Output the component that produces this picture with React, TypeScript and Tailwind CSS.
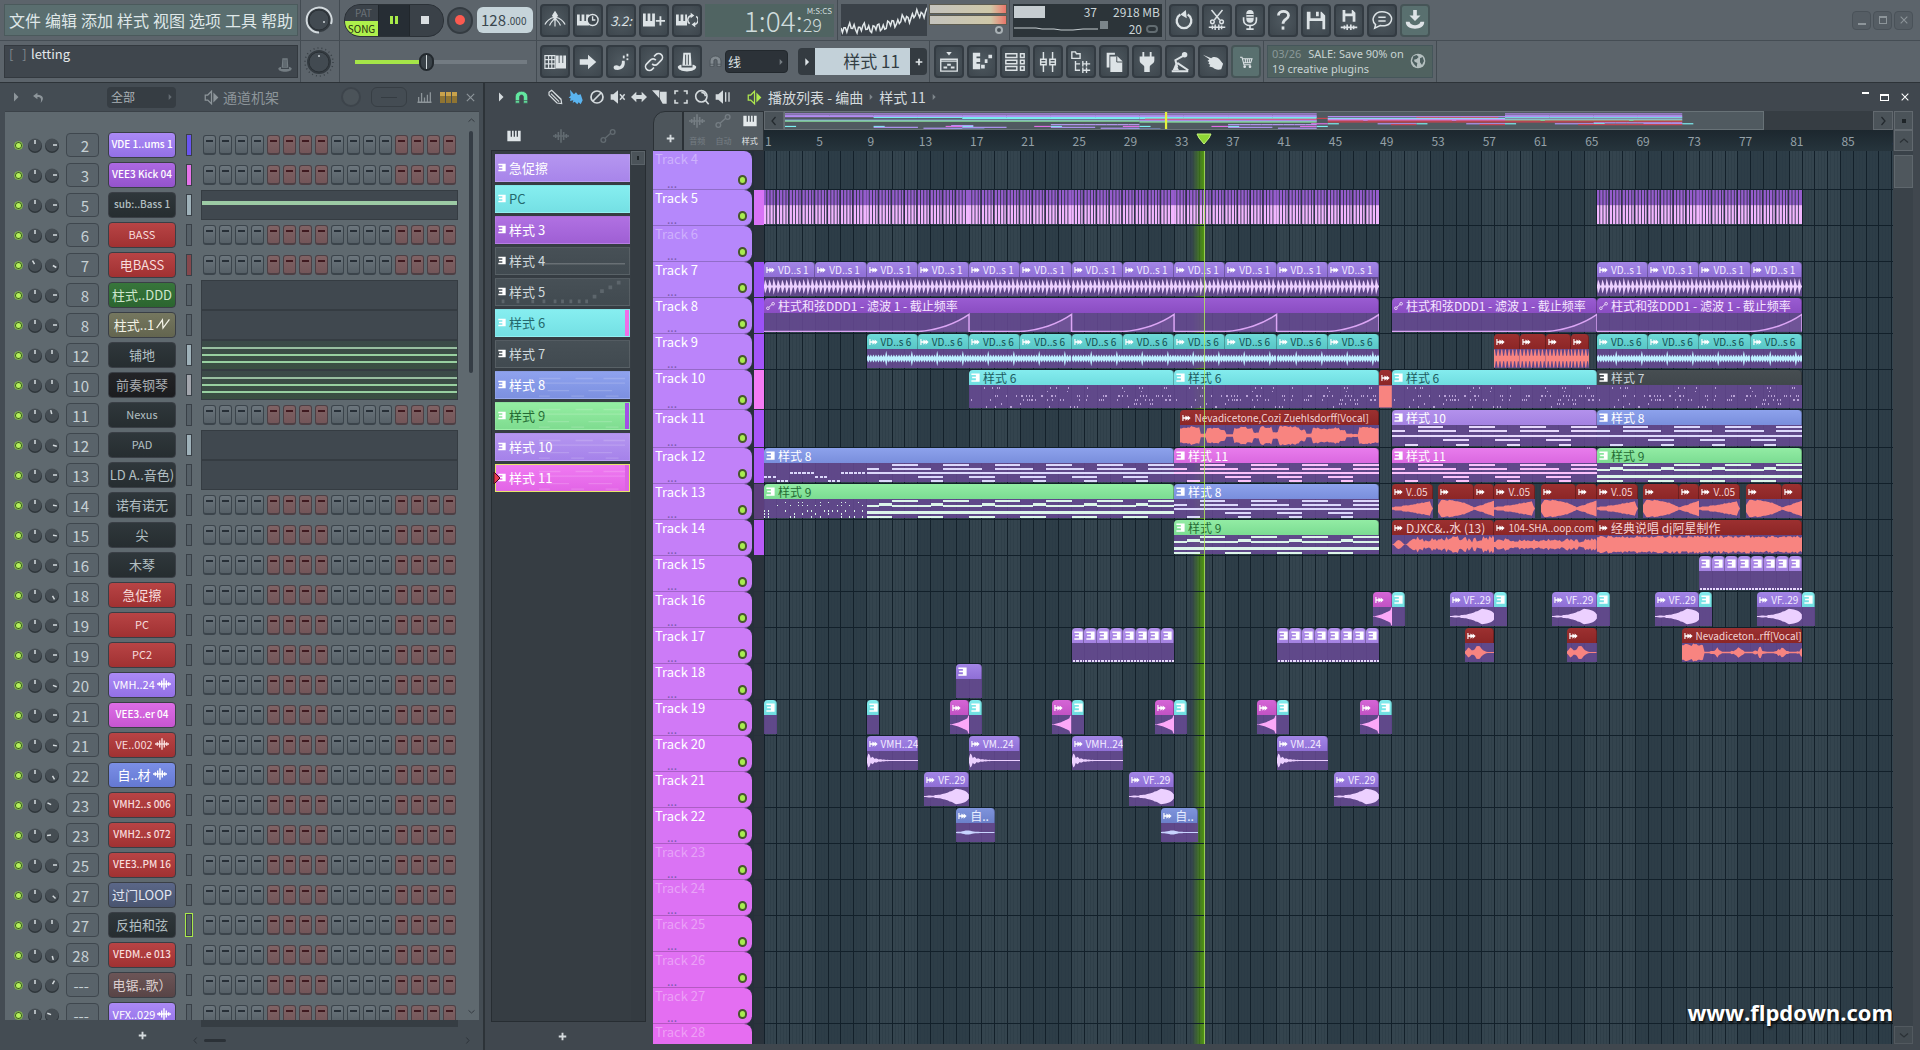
import React, { useState } from "react";
import clsx from "clsx";

/* ------------------------------------------------------------------ data */

const SPAN = 88.1;
const MAP_SPAN = 88.3;
const PLAYHEAD = 35.3;

const at = (bar: number) => `${((bar - 1) / SPAN) * 100}%`;
const len = (bars: number) => `${(bars / SPAN) * 100}%`;

const hasCjk = (text: string) => /[\u4e00-\u9fff]/.test(text);

const noise = (i: number) => {
  const v = Math.sin(i * 12.9898 + 4.1) * 43758.5453;
  return v - Math.floor(v);
};

type Tone = "red" | "violet" | "purple" | "magenta" | "blue" | "dark" | "black" | "green" | "olive" | "slate" | "brown";

const channelTone: Record<Tone, string> = {
  red: "from-[#b84445] to-[#a03132] text-[#f7dcdc]",
  violet: "from-[#ab8af5] to-[#9370e6] text-white",
  purple: "from-[#ad69e2] to-[#9453cc] text-white",
  magenta: "from-[#dd6de6] to-[#c655d0] text-white",
  blue: "from-[#7b8fe6] to-[#6478d2] text-white",
  dark: "from-[#2f373b] to-[#262d30] text-[#b4c0c4]",
  black: "from-[#232427] to-[#1b1c1f] text-[#a9adb1]",
  green: "from-[#37763b] to-[#2b652f] text-[#cfe6cf]",
  olive: "from-[#75775f] to-[#63654f] text-[#f2f2e6]",
  slate: "from-[#5b6788] to-[#49546f] text-[#e2e7f2]",
  brown: "from-[#6c5557] to-[#584446] text-[#dccfcf]",
};

type Channel = {
  no: string;
  name: string;
  tone: Tone;
  wave?: boolean;
  auto?: boolean;
  lamp?: string;
  roll?: number;
  knob?: number;
  selected?: boolean;
};

const channels: Channel[] = [
  { no: "2", name: "VDE 1..ums 1", tone: "violet", lamp: "bg-[#6a55f0]", knob: 90 },
  { no: "3", name: "VEE3 Kick 04", tone: "purple", lamp: "bg-[#e673ea]", knob: 90 },
  { no: "5", name: "sub:..Bass 1", tone: "dark", lamp: "bg-[#9fb2ba]", roll: 1, knob: 90 },
  { no: "6", name: "BASS", tone: "red", knob: 90 },
  { no: "7", name: "电BASS", tone: "red", lamp: "bg-[#85484d]", knob: 120 },
  { no: "8", name: "柱式..DDD", tone: "green", roll: 0, knob: 90 },
  { no: "8", name: "柱式..1", tone: "olive", auto: true, roll: 0, knob: 90 },
  { no: "12", name: "铺地", tone: "dark", lamp: "bg-[#9fb2ba]", roll: 3, knob: 0 },
  { no: "10", name: "前奏钢琴", tone: "black", lamp: "bg-[#a3a6ad]", roll: 3, knob: 0 },
  { no: "11", name: "Nexus", tone: "dark", knob: -15 },
  { no: "12", name: "PAD", tone: "dark", lamp: "bg-[#9fb2ba]", roll: 0, knob: 105 },
  { no: "13", name: "LD A..音色)", tone: "dark", roll: 0, knob: 90 },
  { no: "14", name: "诺有诺无", tone: "dark", knob: 100 },
  { no: "15", name: "尖", tone: "dark", knob: 100 },
  { no: "16", name: "木琴", tone: "dark", knob: 90 },
  { no: "18", name: "急促擦", tone: "red", knob: 150 },
  { no: "19", name: "PC", tone: "red", knob: 90 },
  { no: "19", name: "PC2", tone: "red", knob: 90 },
  { no: "20", name: "VMH..24", tone: "violet", wave: true, knob: 110 },
  { no: "21", name: "VEE3..er 04", tone: "magenta", knob: 90 },
  { no: "21", name: "VE..002", tone: "red", wave: true, knob: 100 },
  { no: "22", name: "自..材", tone: "blue", wave: true, knob: 150 },
  { no: "23", name: "VMH2..s 006", tone: "red", knob: -65 },
  { no: "23", name: "VMH2..s 072", tone: "red", knob: -95 },
  { no: "25", name: "VEE3..PM 16", tone: "red", knob: 90 },
  { no: "27", name: "过门LOOP", tone: "slate", knob: 135 },
  { no: "27", name: "反拍和弦", tone: "dark", knob: 0, selected: true },
  { no: "28", name: "VEDM..e 013", tone: "red", knob: 165 },
  { no: "---", name: "电锯..歌）", tone: "brown", knob: 30 },
  { no: "---", name: "VFX..029", tone: "violet", wave: true, knob: -70 },
];

type PatternItem = { name: string; look: string; strip?: string; lines?: number; dots?: boolean };

const patterns: PatternItem[] = [
  { name: "急促擦", look: "from-[#b596f0] to-[#a885ea] text-white" },
  { name: "PC", look: "from-[#86eef0] to-[#74e0e4] text-[#24686c]" },
  { name: "样式 3", look: "from-[#b071e2] to-[#9f5fd4] text-white" },
  { name: "样式 4", look: "from-[#475056] to-[#414a50] text-[#cfd9dc]", lines: 1 },
  { name: "样式 5", look: "from-[#475056] to-[#414a50] text-[#cfd9dc]", dots: true },
  { name: "样式 6", look: "from-[#86eef0] to-[#74e0e4] text-[#24686c]", strip: "bg-[#ee6fe8]" },
  { name: "样式 7", look: "from-[#475056] to-[#414a50] text-[#cfd9dc]" },
  { name: "样式 8", look: "from-[#8ea2ee] to-[#7c90e0] text-white", lines: 3 },
  { name: "样式 9", look: "from-[#94eea2] to-[#7fdc90] text-[#256b34]", strip: "bg-[#a24fe6]", lines: 3 },
  { name: "样式 10", look: "from-[#b596f0] to-[#a582ea] text-white", lines: 3 },
  { name: "样式 11", look: "from-[#f07af2] to-[#e264e6] text-white", strip: "bg-[#dd62e4]", lines: 3 },
];

type Kind = "pattern" | "audio" | "auto" | "stripes";
type Body =
  | "beat" | "hat" | "saw" | "vocal" | "vocal2" | "chops" | "loop" | "wall" | "v05" | "blob"
  | "tail" | "riser" | "decay" | "swell" | "thin" | "stab" | "block"
  | "ramp" | "chord" | "pads" | "dots" | "ticks" | "empty";
type Look = "violet" | "purple" | "deep" | "cyan" | "teal" | "red" | "blue" | "sky" | "green" | "pink" | "magenta" | "grey";

const clipLook: Record<Look, { head: string; color: string; ink: string }> = {
  violet: { head: "from-[#a385e6] to-[#8f6fd6] text-[#f3ecff]", color: "#b295f5", ink: "#ecd0ff" },
  purple: { head: "from-[#b391ec] to-[#a482e2] text-white", color: "#b99bf6", ink: "#e6d8fb" },
  deep: { head: "from-[#9a5cd2] to-[#8a4dc2] text-[#f5e6ff]", color: "#b88af5", ink: "#dca6f5" },
  cyan: { head: "from-[#84ecee] to-[#6fdde0] text-[#1d5c60]", color: "#7eeff2", ink: "#b9a2d6" },
  teal: { head: "from-[#6edad8] to-[#58c6c6] text-[#144e50]", color: "#78e8ea", ink: "#bdf0ff" },
  red: { head: "from-[#9c3030] to-[#8c2626] text-[#f5d5d5]", color: "#c84450", ink: "#f88480" },
  blue: { head: "from-[#8da2ec] to-[#798edc] text-white", color: "#8fa6f2", ink: "#dcd8fb" },
  sky: { head: "from-[#7f94dc] to-[#6b80ca] text-[#e8eeff]", color: "#8fa6f2", ink: "#c8d4ff" },
  green: { head: "from-[#92eca4] to-[#7bdc92] text-[#256b34]", color: "#90f0a4", ink: "#dcf5ea" },
  pink: { head: "from-[#e87cec] to-[#da68e0] text-white", color: "#ee80f2", ink: "#fbc2fb" },
  magenta: { head: "from-[#d565d6] to-[#c252c4] text-white", color: "#e070e4", ink: "#fca8f8" },
  grey: { head: "from-[#474e52] to-[#40474b] text-[#ccd6da]", color: "#7a848a", ink: "#b9a2d6" },
};

type ClipData = { from: number; to: number; kind: Kind; look: Look; body: Body; title?: string };

const clip = (from: number, to: number, kind: Kind, look: Look, body: Body, title?: string): ClipData => ({
  from, to, kind, look, body, title,
});

const run = (from: number, count: number, step: number, make: (a: number, b: number) => ClipData) =>
  Array.from({ length: count }, (_, i) => make(from + i * step, from + (i + 1) * step));

const drum = (a: number, b: number) => clip(a, b, "audio", "violet", "beat", "VD..s 1");
const hat = (a: number, b: number) => clip(a, b, "audio", "teal", "hat", "VD..s 6");
const cell = (a: number, b: number) => clip(a, b, "pattern", "purple", "ticks");
const sweep = (a: number) => [
  clip(a - 1.5, a, "audio", "magenta", "swell"),
  clip(a, a + 1, "pattern", "cyan", "empty"),
];
const rise = (a: number) => [
  clip(a - 3.5, a, "audio", "violet", "riser", "VF..29"),
  clip(a, a + 1, "pattern", "cyan", "empty"),
];
const voice = (a: number) => [
  clip(a, a + 3.2, "audio", "red", "v05", "V..05"),
  clip(a + 3.6, a + 6.4, "audio", "red", "blob"),
  clip(a + 6.4, a + 8, "audio", "red", "tail"),
];
const AUTO_NAME = "柱式和弦DDD1 - 滤波 1 - 截止频率";

type Track = { no: number; height: string; shade: string; lamp?: string; muted?: boolean; clips: ClipData[] };

const tracks: Track[] = [
  { no: 4, height: "h-[39px]", shade: "bg-[#b48afb]", muted: true, clips: [] },
  {
    no: 5, height: "h-9", shade: "bg-[#b588fb]", lamp: "bg-[#d873f6]",
    clips: [clip(1, 49, "stripes", "deep", "empty"), clip(66, 82, "stripes", "deep", "empty")],
  },
  { no: 6, height: "h-9", shade: "bg-[#b687fb]", muted: true, clips: [] },
  { no: 7, height: "h-9", shade: "bg-[#b886fb]", lamp: "bg-[#9b52f6]", clips: [...run(1, 12, 4, drum), ...run(66, 4, 4, drum)] },
  {
    no: 8, height: "h-9", shade: "bg-[#b985fa]", lamp: "bg-[#9b52f6]",
    clips: [
      clip(1, 49, "auto", "deep", "ramp", AUTO_NAME),
      clip(50, 66, "auto", "deep", "ramp", AUTO_NAME),
      clip(66, 82, "auto", "deep", "ramp", AUTO_NAME),
    ],
  },
  {
    no: 9, height: "h-9", shade: "bg-[#bb84fa]", lamp: "bg-[#a455f8]",
    clips: [
      ...run(9, 10, 4, hat),
      ...run(58, 3, 2, (a, b) => clip(a, b, "audio", "red", "saw")),
      clip(64, 65.4, "audio", "red", "saw"),
      ...run(66, 4, 4, hat),
    ],
  },
  {
    no: 10, height: "h-10", shade: "bg-[#bd83fa]", lamp: "bg-[#f57bf4]",
    clips: [
      clip(17, 33, "pattern", "cyan", "dots", "样式 6"),
      clip(33, 49, "pattern", "cyan", "dots", "样式 6"),
      clip(49, 50, "audio", "red", "block"),
      clip(50, 66, "pattern", "cyan", "dots", "样式 6"),
      clip(66, 82, "pattern", "grey", "dots", "样式 7"),
    ],
  },
  {
    no: 11, height: "h-[38px]", shade: "bg-[#bf82f9]", lamp: "bg-[#a955f8]",
    clips: [
      clip(33.5, 49, "audio", "red", "vocal", "Nevadicetone,Cozi Zuehlsdorff[Vocal]"),
      clip(50, 66, "pattern", "purple", "chord", "样式 10"),
      clip(66, 82, "pattern", "blue", "chord", "样式 8"),
    ],
  },
  {
    no: 12, height: "h-9", shade: "bg-[#c181f9]", lamp: "bg-[#ad57f8]",
    clips: [
      clip(1, 33, "pattern", "blue", "chord", "样式 8"),
      clip(33, 49, "pattern", "pink", "chord", "样式 11"),
      clip(50, 66, "pattern", "pink", "chord", "样式 11"),
      clip(66, 82, "pattern", "green", "pads", "样式 9"),
    ],
  },
  {
    no: 13, height: "h-9", shade: "bg-[#c380f9]", lamp: "bg-[#5c3f7c]",
    clips: [
      clip(1, 33, "pattern", "green", "pads", "样式 9"),
      clip(33, 49, "pattern", "blue", "chord", "样式 8"),
      ...[50, 58, 66, 74].flatMap(voice),
    ],
  },
  {
    no: 14, height: "h-9", shade: "bg-[#c57ff8]", lamp: "bg-[#b95bf8]",
    clips: [
      clip(33, 49, "pattern", "green", "pads", "样式 9"),
      clip(50, 58, "audio", "red", "chops", "DJXC&..水 (13)"),
      clip(58, 66, "audio", "red", "loop", "104-SHA..oop.com"),
      clip(66, 82, "audio", "red", "wall", "经典说唱 dj阿星制作"),
    ],
  },
  { no: 15, height: "h-9", shade: "bg-[#c87df8]", clips: run(74, 8, 1, cell) },
  { no: 16, height: "h-9", shade: "bg-[#ca7cf7]", clips: [...sweep(50), ...[58, 66, 74, 82].flatMap(rise)] },
  {
    no: 17, height: "h-9", shade: "bg-[#cc7bf7]",
    clips: [
      ...run(25, 8, 1, cell),
      ...run(41, 8, 1, cell),
      clip(55.7, 58, "audio", "red", "stab"),
      clip(63.7, 66, "audio", "red", "stab"),
      clip(72.6, 82, "audio", "red", "vocal2", "Nevadiceton..rff[Vocal]"),
    ],
  },
  { no: 18, height: "h-9", shade: "bg-[#cf7af7]", clips: [clip(16, 18, "pattern", "violet", "empty")] },
  {
    no: 19, height: "h-9", shade: "bg-[#d179f6]",
    clips: [
      clip(1, 2, "pattern", "cyan", "empty"),
      clip(9, 10, "pattern", "cyan", "empty"),
      ...[17, 25, 33, 41, 49].flatMap(sweep),
    ],
  },
  {
    no: 20, height: "h-9", shade: "bg-[#d377f6]",
    clips: [
      clip(9, 13, "audio", "violet", "decay", "VMH..24"),
      clip(17, 21, "audio", "violet", "decay", "VM..24"),
      clip(25, 29, "audio", "violet", "decay", "VMH..24"),
      clip(41, 45, "audio", "violet", "decay", "VM..24"),
    ],
  },
  {
    no: 21, height: "h-9", shade: "bg-[#d676f5]",
    clips: [13.5, 29.5, 45.5].map((a) => clip(a, a + 3.5, "audio", "violet", "riser", "VF..29")),
  },
  {
    no: 22, height: "h-9", shade: "bg-[#d875f5]",
    clips: [clip(16, 19, "audio", "sky", "thin", "自.."), clip(32, 34.9, "audio", "sky", "thin", "自..")],
  },
  { no: 23, height: "h-9", shade: "bg-[#da73f4]", muted: true, clips: [] },
  { no: 24, height: "h-9", shade: "bg-[#dd72f4]", muted: true, clips: [] },
  { no: 25, height: "h-9", shade: "bg-[#df71f3]", muted: true, clips: [] },
  { no: 26, height: "h-9", shade: "bg-[#e170f3]", muted: true, clips: [] },
  { no: 27, height: "h-9", shade: "bg-[#e46ef2]", muted: true, clips: [] },
  { no: 28, height: "h-9", shade: "bg-[#e66df1]", muted: true, clips: [] },
];

/* ----------------------------------------------------------------- icons */

const paths: Record<string, React.ReactNode> = {
  metro: (
    <g fill="none" stroke="currentColor" strokeWidth="1.300">
      <path d="M12 11v8M11 9C7 10 3 13 1 17M13 9c4 1 8 4 10 8M11 11c-2 2-4 4-5 7M13 11c2 2 4 4 5 7" />
      <path d="M12 3l2.500 4-2.500 5-2.500-5z" fill="currentColor" />
    </g>
  ),
  keysClock: (
    <g>
      <path d="M0 6h3v7h2V6h3v7h2V6h3v12H0z" fill="currentColor" />
      <circle cx="17" cy="12" r="6" fill="#3c454c" stroke="currentColor" strokeWidth="1.500" />
      <path d="M17 8v4h3" fill="none" stroke="currentColor" strokeWidth="1.500" />
    </g>
  ),
  keysPlus: <path d="M0 5h3v8h2V5h3v8h2V5h3v14H0zM18 8h2v4h4v2h-4v4h-2v-4h-4v-2h4z" fill="currentColor" />,
  keysLoop: (
    <g>
      <path d="M0 6h3v7h2V6h3v7h2V6h2v12H0z" fill="currentColor" />
      <path d="M15 16a5 5 0 0 1 2-9M22 8a5 5 0 0 1-2 9" fill="none" stroke="currentColor" strokeWidth="1.600" />
      <path d="M16 4l4 3-4 3zM21 14l-4 3 4 3z" fill="currentColor" />
    </g>
  ),
  keys: <path d="M2 4h5v9h2V4h2.500v9h2V4H16v9h2V4h4v16H2z" fill="currentColor" />,
  typing: (
    <g>
      <path d="M1 5h11v14H1zM1 9.500h11M1 14h11M5 5v14M8.500 5v14" fill="none" stroke="currentColor" strokeWidth="1.300" />
      <path d="M13 5h3v8h1V5h3v8h1V5h3v14H13z" fill="currentColor" />
    </g>
  ),
  arrow: <path d="M3 9h9V4l9 8-9 8v-5H3z" fill="currentColor" />,
  slide: (
    <g fill="currentColor">
      <ellipse cx="7" cy="18" rx="3" ry="2.500" />
      <path d="M7 20.500c7 0 10-4 9-10h-3c0 4-1 6-5 7z" />
      <rect x="14" y="5" width="2" height="3" />
      <rect x="18" y="3" width="2" height="3" />
      <rect x="18" y="8" width="2" height="2" />
    </g>
  ),
  chain: (
    <g fill="none" stroke="currentColor" strokeWidth="1.800">
      <path d="M10 14a4 4 0 0 0 6 0l4-4a4 4 0 0 0-6-6l-2 2" />
      <path d="M14 10a4 4 0 0 0-6 0l-4 4a4 4 0 0 0 6 6l2-2" />
    </g>
  ),
  hat: (
    <g fill="currentColor">
      <path d="M8 2h8l1 14H7zM2 17c2-2 3-2 4-2v3h12v-3c1 0 2 0 4 2 1 7-21 7-20 0z" />
      <path d="M10.500 4v11M13.500 4v11" stroke="#3c454c" />
    </g>
  ),
  undo: (
    <g fill="none" stroke="currentColor" strokeWidth="2.500">
      <path d="M8 6a8 8 0 1 0 8 0" />
      <path d="M14 1l-6 5 7 4z" fill="currentColor" stroke="none" />
    </g>
  ),
  cut: (
    <g fill="none" stroke="currentColor" strokeWidth="1.600">
      <path d="M6 1l9 11M18 1L9 12" />
      <circle cx="7" cy="14" r="2" />
      <circle cx="17" cy="14" r="2" />
      <path d="M3 20h18M7 18v4M10 17v6M14 17v6M17 18v4" />
    </g>
  ),
  mic: (
    <g fill="none" stroke="currentColor" strokeWidth="1.800">
      <rect x="8" y="1" width="8" height="14" rx="4" fill="currentColor" stroke="none" />
      <path d="M5 9v3c0 8 14 8 14 0V9M12 18v4M8 22h8" />
      <path d="M8 6h8M8 9h8" stroke="#3c454c" strokeWidth="1" />
    </g>
  ),
  help: (
    <g fill="none" stroke="currentColor" strokeWidth="3">
      <path d="M7 7c0-6 11-6 11 0 0 4-6 4-6 9" />
      <path d="M12 19v3.500" />
    </g>
  ),
  save: <path d="M2 3h16l4 4v15H2zM6 3v7h11V3h-2v5h-3V3zM5 13v9h14v-9z" fill="currentColor" fillRule="evenodd" />,
  saveWave: (
    <g>
      <path d="M5 1h11l3 3v10H5zM8 1v4h7V1zM8 8v6h8V8z" fill="currentColor" fillRule="evenodd" />
      <path d="M3 20h18M7 18v4M10 17v6M14 17v6M17 18v4" stroke="currentColor" strokeWidth="1.800" />
    </g>
  ),
  chat: (
    <g fill="none" stroke="currentColor" strokeWidth="1.600">
      <path d="M5 17c-6-5-1-14 7-14s13 6 9 12c-2 3-7 4-11 3l-6 3z" />
      <path d="M8 9h8M8 13h8" />
    </g>
  ),
  down: (
    <g fill="currentColor">
      <path d="M10 1h4v6h4l-6 6-6-6h4z" />
      <path d="M2 14h4c1 5 11 5 12 0h4c1 10-21 10-20 0z" />
    </g>
  ),
  playlist: (
    <g fill="none" stroke="currentColor" strokeWidth="1.500">
      <path d="M3 9h18v13H3zM3 11h18" />
      <path d="M6 18h4M10 15h4M14 18h4" strokeWidth="2.200" />
      <path d="M9 1h6l-3 4z" fill="currentColor" stroke="none" />
    </g>
  ),
  pianoroll: (
    <g fill="currentColor">
      <path d="M2 2h8v4H6v2h4v4H6v2h4v6H2z" />
      <path d="M11 15h4v4h-4zM15 9h3v4h-3zM19 4h4v4h-4z" />
    </g>
  ),
  rack: (
    <path d="M2 3h12v4H2zM2 10h12v4H2zM2 17h12v4H2zM18 3h4v4h-4zM18 10h4v4h-4zM18 17h4v4h-4z" fill="none" stroke="currentColor" strokeWidth="1.600" />
  ),
  mixer: (
    <g fill="none" stroke="currentColor" strokeWidth="1.600">
      <path d="M7 1v8M7 15v8M17 1v8M17 15v8M4 9h6v6H4zM14 9h6v6h-6zM4 12h6M14 12h6" />
    </g>
  ),
  browser: (
    <g fill="none" stroke="currentColor" strokeWidth="1.500">
      <path d="M2 1h4l1 2h4v5H2zM6 11v10h5M6 14h5" />
      <path d="M14 11v6M14 14h8M18 11v6M14 18v6M14 21h8M18 18v6" />
    </g>
  ),
  copy: (
    <g fill="currentColor">
      <path d="M4 2h9v2H7v14H4z" />
      <path d="M8 6h8l5 5v12H8z" />
      <path d="M15 6v6h6" stroke="#3c454c" fill="none" />
    </g>
  ),
  plug: <path d="M7 1h2v5h6V1h2v5h3v4c0 4-4 4-5 7v6H9v-6c-1-3-5-3-5-7V6h3z" fill="currentColor" />,
  arm: (
    <g fill="none" stroke="currentColor" strokeWidth="2.200">
      <path d="M16 5L7 10l2 8M3 22h18M9 13l12 8" />
      <circle cx="17" cy="4" r="3" fill="currentColor" stroke="none" />
      <path d="M4 21l3-7 4 7z" fill="currentColor" stroke="none" />
    </g>
  ),
  hand: <path d="M1 4l9 4c2-2 6-2 9 1l4 5-2 6c-4 1-7 0-9-2l-4-1 1-2-2-1 1-2-2-1 2-2z" fill="currentColor" />,
  cart: (
    <g fill="none" stroke="currentColor" strokeWidth="1.600">
      <path d="M3 5h3l3 11h10M7 7h14l-2 6H8M11 7v6M14 7v6M17 7v6" />
      <circle cx="10" cy="19" r="1.200" fill="currentColor" />
      <circle cx="18" cy="19" r="1.200" fill="currentColor" />
    </g>
  ),
  magnet: <path d="M2 21V11C2-1 22-1 22 11v10h-7V11c0-4-6-4-6 0v10zM2 17h7M15 17h7" fill="currentColor" stroke="#40474e" strokeWidth="1.200" />,
  pencil: (
    <g fill="none" stroke="currentColor" strokeWidth="1.800">
      <path d="M3 5l4-3 14 13 1 7-7-1L3 9zM6 7l12 12M10 5l11 11" />
    </g>
  ),
  brush: <path d="M3 1l6 7 3-3 3 4 4-1 3 9-3 6-3-3-2 3-4-4-3 2 1-4-5 1 1-4-3-1 3-3z" fill="currentColor" />,
  erase: (
    <g fill="none" stroke="currentColor" strokeWidth="2.600">
      <circle cx="12" cy="12" r="9" />
      <path d="M6 18L18 6" />
    </g>
  ),
  mute: (
    <g fill="currentColor">
      <path d="M1 8h4l7-6v20l-7-6H1z" />
      <path d="M15 8l7 8M22 8l-7 8" stroke="currentColor" strokeWidth="2.200" />
    </g>
  ),
  slip: <path d="M0 12l8-8v5h8V4l8 8-8 8v-5H8v5z" fill="currentColor" />,
  slice: <path d="M0 2h11v12zM12 4h10v18h-6L12 15z" fill="currentColor" />,
  select: <path d="M3 8V3h5M16 3h5v5M21 16v5h-5M8 21H3v-5" fill="none" stroke="currentColor" strokeWidth="2.400" />,
  zoom: (
    <g fill="none" stroke="currentColor" strokeWidth="2.400">
      <circle cx="11" cy="11" r="8.500" />
      <path d="M17 17l5 6M11 5a6 6 0 0 1 6 6" />
    </g>
  ),
  play: (
    <g fill="currentColor">
      <path d="M1 8h4l7-6v20l-7-6H1z" />
      <path d="M16 5v14M21 5v14" stroke="currentColor" strokeWidth="2" />
    </g>
  ),
  speaker: (
    <g>
      <path d="M2 8h4l6-6v20l-6-6H2z" fill="none" stroke="currentColor" strokeWidth="2" />
      <path d="M15 4l8 8-8 8z" fill="currentColor" />
    </g>
  ),
  back: <path d="M10 3L2 9l8 6v-4c6 0 8 3 6 11 8-8 4-15-6-15z" fill="currentColor" />,
  tri: <path d="M8 3l9 9-9 9z" fill="currentColor" />,
  cross: <path d="M4 4l16 16M20 4L4 20" stroke="currentColor" strokeWidth="2.500" />,
  plus: <path d="M12 2v20M2 12h20" stroke="currentColor" strokeWidth="5" />,
  bars: <path d="M2 20v-8M7 20V5M12 20v-7M17 20V8M22 20V4M0 21h24" stroke="currentColor" strokeWidth="2.200" />,
  left: <path d="M15 4l-7 8 7 8" fill="none" stroke="currentColor" strokeWidth="2.500" />,
  right: <path d="M9 4l7 8-7 8" fill="none" stroke="currentColor" strokeWidth="2.500" />,
  up: <path d="M4 15l8-7 8 7" fill="none" stroke="currentColor" strokeWidth="2.500" />,
  dn: <path d="M4 9l8 7 8-7" fill="none" stroke="currentColor" strokeWidth="2.500" />,
  wave: <path d="M0 12h24M4 9v6M8 6v12M12 2v20M16 6v12M20 9v6" stroke="currentColor" strokeWidth="2.400" />,
  link: (
    <g fill="none" stroke="currentColor" strokeWidth="2">
      <circle cx="5" cy="18" r="3.500" />
      <circle cx="19" cy="6" r="3.500" />
      <path d="M8 15l8-7" />
    </g>
  ),
  zigzag: <path d="M1 19L11 5l1 14L23 4" fill="none" stroke="currentColor" strokeWidth="2.200" />,
  step: <path d="M1 1h22v22H1v-4h12v-5H3v-4h10V5H1z" fill="currentColor" />,
  sample: <path d="M1 4h3v6h5V5l6 5V5l8 7-8 7v-5l-6 5v-5H4v6H1z" fill="currentColor" />,
  globe: (
    <g>
      <circle cx="12" cy="12" r="11" fill="currentColor" />
      <path d="M5 5l5-2 3 3-3 3-4 1 1 3 4 2-1 6-4-4-3-5zM15 8l4-2 2 6-3 6-3-4z" fill="#4c5f5f" />
    </g>
  ),
};

function Icon({ name, className }: { name: string; className?: string }) {
  return (
    <svg viewBox="0 0 24 24" className={clsx("shrink-0", className)} aria-hidden="true">
      {paths[name]}
    </svg>
  );
}

/* --------------------------------------------------------------- toolbar */

function ToolButton({ icon, label, lit, children }: { icon?: string; label: string; lit?: boolean; children?: React.ReactNode }) {
  return (
    <button
      aria-label={label}
      className={clsx(
        "flex h-[33px] w-[30px] shrink-0 items-center justify-center rounded border-2 text-[#dde3e6]",
        lit ? "border-[#465557] bg-[#59706f]" : "border-[#333b42] bg-radial from-[#4f5960] to-[#3d464d]",
      )}
    >
      {icon ? <Icon name={icon} className={icon === "cart" ? "h-4 w-4" : "h-[22px] w-[22px]"} /> : children}
    </button>
  );
}

function Divider() {
  return <div className="w-px shrink-0 self-stretch bg-[#434b52]" />;
}

function Dial({ ring }: { ring?: boolean }) {
  return (
    <svg viewBox="0 0 30 34" className="h-[34px] w-[30px]" aria-hidden="true">
      {!ring && <circle cx="15" cy="17" r="14" fill="none" stroke="#3a4147" strokeWidth="1.500" strokeDasharray="1 3" />}
      <circle cx="15" cy="17" r="12" fill="#343b41" />
      {ring && <path d="M15 29.500A12.500 12.500 0 1 1 27 21" fill="none" stroke="#d3dade" strokeWidth="2" />}
      <circle cx="15" cy="17" r="10" fill="#424a51" stroke="#2a3035" />
      <circle cx={ring ? 20 : 15} cy={ring ? 19 : 11} r="1" fill="#cfd6da" />
    </svg>
  );
}

function Scope() {
  const points = Array.from({ length: 60 }, (_, i) => {
    const base = i < 26 ? 24 : 24 - (i - 26) * 0.5;
    return `${(i * 86) / 59},${base + Math.sin(i * 1.9) * 3.5 + Math.sin(i * 0.7) * 2}`;
  });
  return (
    <svg viewBox="0 0 86 32" preserveAspectRatio="none" className="h-8 w-[86px] shrink-0 bg-[#3b4249]" aria-hidden="true">
      <polyline points={points.join(" ")} fill="none" stroke="#e2e8ea" strokeWidth="1.500" />
    </svg>
  );
}

function TopBar() {
  const [mode, setMode] = useState<"pat" | "song">("song");
  return (
    <div className="flex h-[41px] items-center border-b border-[#454d54] pl-1">
      <nav className="flex h-8 w-[294px] shrink-0 items-center justify-between border border-[#4b5a5c] bg-[#5a6e6f] px-1 text-base text-[#dfe7e8]">
        {["文件", "编辑", "添加", "样式", "视图", "选项", "工具", "帮助"].map((m) => (
          <button key={m}>{m}</button>
        ))}
      </nav>
      <div className="ml-0.5 flex self-stretch">
        <Divider />
      </div>
      <button aria-label="主音量" className="flex w-[38px] shrink-0 justify-center pr-0.5">
        <Dial ring />
      </button>
      <Divider />
      <div className="ml-1 flex h-[33px] w-[100px] shrink-0 overflow-hidden rounded-2xl border border-[#2b3137] bg-[#2d343b]">
        <div className="flex w-[33px] flex-col bg-[#3b4249]">
          <button onClick={() => setMode("pat")} className={clsx("h-4 pl-1 text-[10px] leading-4", mode === "pat" ? "bg-[#aef04c] text-[#1f2a10]" : "text-[#6a7177]")}>
            PAT
          </button>
          <button onClick={() => setMode("song")} className={clsx("h-4 text-[10px] leading-4", mode === "song" ? "bg-[#aef04c] text-[#1f2a10]" : "text-[#6a7177]")}>
            SONG
          </button>
        </div>
        <button aria-label="暂停" className="flex w-8 items-center justify-center gap-0.5 border-x border-[#20262b] bg-[#262d34]">
          <span className="h-2 w-[3px] bg-[#a8ea4a]" />
          <span className="h-2 w-[3px] bg-[#a8ea4a]" />
        </button>
        <button aria-label="停止" className="flex flex-1 items-center justify-center bg-[#3a4148] pr-1">
          <span className="h-2 w-2 bg-[#d9dee1]" />
        </button>
      </div>
      <button aria-label="录音" className="ml-[3px] flex h-[27px] w-[26px] shrink-0 items-center justify-center rounded-full border-2 border-[#343b41] bg-[#454d54]">
        <span className="h-[10px] w-[10px] rounded-full bg-[#fb5a50]" />
      </button>
      <label className="ml-1 flex h-[26px] w-[56px] shrink-0 items-center rounded-md bg-[#c6d4da] pb-0.5 pl-1 text-[#3a474e]">
        <input aria-label="速度" defaultValue="128" className="w-[26px] bg-transparent text-[15px] outline-none" />
        <span className="pt-1 text-[10px]">.000</span>
      </label>
      <div className="ml-[3px] flex self-stretch">
        <Divider />
      </div>
      <div className="ml-[3px] flex gap-[3px]">
        <ToolButton icon="metro" label="节拍器" />
        <ToolButton icon="keysClock" label="等待输入" />
        <ToolButton label="倒计时">
          <span className="text-[13px] italic">3.2:</span>
        </ToolButton>
        <ToolButton icon="keysPlus" label="叠加录音" />
        <ToolButton icon="keysLoop" label="循环录音" />
      </div>
      <div className="relative ml-[3px] flex h-[33px] w-[129px] shrink-0 items-baseline justify-end bg-[#506462] pr-3 leading-[33px] text-[#cfdcdc]">
        <span className="text-[28px] font-light">1:04:</span>
        <span className="text-lg font-light">29</span>
        <span className="absolute right-0.5 top-px text-[8px] leading-3">M:S:CS</span>
      </div>
      <div className="ml-[3px] flex self-stretch">
        <Divider />
      </div>
      <div className="ml-[3px]">
        <Scope />
      </div>
      <div className="ml-0.5 flex h-8 w-[78px] shrink-0 flex-col">
        <div className="h-[10px] border border-[#5d5c50] bg-linear-to-r from-[#c4c3bd] via-[#cfc8a8] via-80% to-[#e8756a]" />
        <div className="mt-px h-[10px] border border-[#5d5c50] bg-linear-to-r from-[#c4c3bd] via-[#cfc8a8] via-80% to-[#e8756a]" />
        <div className="mt-px mr-1 flex h-2 w-2 items-center justify-center self-end rounded-full bg-[#a9b1b5]">
          <span className="h-1 w-1 rounded-full bg-[#4a5258]" />
        </div>
      </div>
      <div className="ml-0.5 flex self-stretch">
        <Divider />
      </div>
      <div className="relative ml-[3px] flex h-[33px] w-[149px] shrink-0 flex-col bg-[#2c3439] text-[12px] text-[#cbd4d8]">
        <div className="flex h-[17px] items-center">
          <span className="ml-px h-3 w-[31px] bg-[#c6cdd1]" />
          <span className="w-[52px] text-right">37</span>
          <span className="flex-1 pr-0.5 text-right">2918 MB</span>
        </div>
        <div className="flex h-4 items-center">
          <svg viewBox="0 0 85 12" className="h-3 w-[85px]" aria-hidden="true">
            <path d="M1 5h22l6 1h12l7 1h12l10-1 15 0" stroke="#c6cdd1" fill="none" />
          </svg>
          <span className="ml-0.5 h-2 w-2 self-start bg-[#7b858a]" />
          <span className="flex-1 text-right">20</span>
          <span className="mx-1 h-2 w-3 rounded-full border-2 border-[#626c71]" />
        </div>
      </div>
      <div className="ml-[3px] flex self-stretch">
        <Divider />
      </div>
      <div className="ml-[3px] flex gap-[3px]">
        <ToolButton icon="undo" label="撤销" />
        <ToolButton icon="cut" label="剪切" />
        <ToolButton icon="mic" label="麦克风" />
        <ToolButton icon="help" label="帮助" />
        <ToolButton icon="save" label="保存" />
        <ToolButton icon="saveWave" label="导出" />
        <ToolButton icon="chat" label="消息" />
        <ToolButton icon="down" label="下载" lit />
      </div>
      <div className="ml-auto mr-[7px] flex gap-0.5">
        <button aria-label="最小化" className="flex h-[19px] w-[19px] items-end justify-center rounded border border-[#4a5259] bg-[#555d64] pb-1">
          <span className="h-0.5 w-2 bg-[#8d959a]" />
        </button>
        <button aria-label="还原" className="flex h-[19px] w-[19px] items-center justify-center rounded border border-[#4a5259] bg-[#555d64]">
          <span className="h-2 w-2 border border-t-2 border-[#8d959a]" />
        </button>
        <button aria-label="关闭" className="flex h-[19px] w-[19px] items-center justify-center rounded border border-[#4a5259] bg-[#555d64] text-[#8d959a]">
          <Icon name="cross" className="h-[10px] w-[10px]" />
        </button>
      </div>
    </div>
  );
}

function SecondBar() {
  return (
    <div className="flex h-[41px] items-center pl-1">
      <div className="relative flex h-[33px] w-[294px] shrink-0 items-start border border-[#33393f] bg-[#3f464d] px-1 pt-px text-[13px] text-[#e3e8ea]">
        <span className="w-5 whitespace-pre text-[#7f888d]">[   ]</span>
        <span className="pl-0.5">letting</span>
        <Icon name="hat" className="absolute bottom-1 right-1 h-4 w-4 text-[#747d83]" />
      </div>
      <div className="ml-0.5 flex self-stretch">
        <Divider />
      </div>
      <button aria-label="主音高" className="flex w-[38px] shrink-0 justify-center pr-0.5">
        <Dial />
      </button>
      <Divider />
      <div className="flex w-[196px] shrink-0 items-center pl-[15px]">
        <input
          type="range"
          aria-label="歌曲位置"
          defaultValue={41}
          className="h-1 w-[172px] appearance-none bg-linear-to-r from-[#a5e548] from-40% to-[#737b82] to-40% [&::-webkit-slider-thumb]:h-[18px] [&::-webkit-slider-thumb]:w-[15px] [&::-webkit-slider-thumb]:appearance-none [&::-webkit-slider-thumb]:rounded-full [&::-webkit-slider-thumb]:border-2 [&::-webkit-slider-thumb]:border-[#23292e] [&::-webkit-slider-thumb]:bg-linear-to-r [&::-webkit-slider-thumb]:from-[#3a4248] [&::-webkit-slider-thumb]:from-45% [&::-webkit-slider-thumb]:via-[#d5dcdf] [&::-webkit-slider-thumb]:via-50% [&::-webkit-slider-thumb]:to-[#3a4248] [&::-webkit-slider-thumb]:to-55%"
        />
      </div>
      <Divider />
      <div className="ml-[3px] flex gap-[3px]">
        <ToolButton icon="typing" label="键盘输入" />
        <ToolButton icon="arrow" label="自动滚动" />
        <ToolButton icon="slide" label="步进编辑" />
        <ToolButton icon="chain" label="链接" />
        <ToolButton icon="hat" label="多重链接" />
      </div>
      <Icon name="magnet" className="ml-[7px] h-[13px] w-[13px] text-[#828a90]" />
      <div className="relative ml-[3px] flex h-[23px] w-[63px] shrink-0 items-center rounded-sm border border-[#22282d] bg-[#2c3238] text-[13px] text-[#dde2e5]">
        <select aria-label="吸附" className="h-full w-full appearance-none bg-transparent pl-0.5 outline-none">
          <option>线</option>
        </select>
        <Icon name="tri" className="pointer-events-none absolute right-0.5 h-2 w-2 text-[#757d83]" />
      </div>
      <button aria-label="样式列表" className="ml-[10px] flex h-[27px] w-[17px] shrink-0 items-center justify-center rounded-l bg-[#343b41] text-[#dfe5e8]">
        <Icon name="tri" className="h-[10px] w-[10px]" />
      </button>
      <input aria-label="当前样式" defaultValue="样式 11" className="h-[27px] w-[95px] shrink-0 bg-[#c3d1d9] pr-[10px] pb-0.5 text-right text-[17px] text-[#333e45] outline-none" />
      <button aria-label="新增样式" className="mr-0.5 flex h-[27px] w-[17px] shrink-0 items-center justify-center rounded-r bg-[#343b41] text-[#dfe5e8]">
        <Icon name="plus" className="h-2 w-2" />
      </button>
      <Divider />
      <div className="ml-1 flex gap-[3px]">
        <ToolButton icon="playlist" label="播放列表" />
        <ToolButton icon="pianoroll" label="钢琴卷帘" />
        <ToolButton icon="rack" label="通道机架" />
        <ToolButton icon="mixer" label="混音台" />
        <ToolButton icon="browser" label="浏览器" />
        <ToolButton icon="copy" label="复制" />
        <ToolButton icon="plug" label="插件" />
        <ToolButton icon="arm" label="脚本" />
        <ToolButton icon="hand" label="触控" />
        <ToolButton icon="cart" label="商店" lit />
      </div>
      <div className="ml-0.5 flex self-stretch">
        <Divider />
      </div>
      <a href="#news" className="mx-[3px] flex h-[33px] w-[166px] shrink-0 items-center justify-between border border-[#45565a] bg-[#506260] pb-0.5 pl-1 pr-[6px] font-['Noto_Sans'] text-[11px] leading-[15px] text-[#c9d4d4]">
        <span>
          <span className="mr-1 text-[#8a9999]">03/26</span> SALE: Save 90% on
          <br />
          19 creative plugins
        </span>
        <Icon name="globe" className="h-4 w-4 text-[#b4bfbf]" />
      </a>
      <Divider />
    </div>
  );
}

/* ---------------------------------------------------------- channel rack */

function Knob({ angle }: { angle: number }) {
  return (
    <svg viewBox="0 0 14 16" className="h-4 w-[14px] shrink-0" aria-hidden="true">
      <circle cx="7" cy="9" r="7" fill="#2f363b" />
      <circle cx="7" cy="8" r="6.500" fill="#454d53" />
      <path d="M7 3v4" stroke="#d5dbde" strokeWidth="1.500" transform={`rotate(${angle} 7 8)`} />
    </svg>
  );
}

function StepRow({ label }: { label: string }) {
  const [on, setOn] = useState<number[]>([]);
  const toggle = (i: number) => setOn(on.includes(i) ? on.filter((n) => n !== i) : [...on, i]);
  return (
    <div className="flex w-[257px] gap-[3px] pl-0.5">
      {Array.from({ length: 16 }, (_, i) => (
        <button
          key={i}
          aria-label={`${label} ${i + 1}`}
          aria-pressed={on.includes(i)}
          onClick={() => toggle(i)}
          className={clsx(
            "flex h-5 w-[13px] shrink-0 justify-center rounded-[3px] border border-b-2 pt-1",
            Math.floor(i / 4) % 2
              ? "border-[#4d3f44] bg-linear-to-b from-[#806264] to-[#735659]"
              : "border-[#3b444b] bg-linear-to-b from-[#6c767d] to-[#566067]",
            on.includes(i) && "brightness-150",
          )}
        >
          <span className={clsx("h-0.5 w-[7px]", Math.floor(i / 4) % 2 ? "bg-[#3f1a20]" : "bg-[#272f37]")} />
        </button>
      ))}
    </div>
  );
}

function RollPreview({ lines }: { lines: number }) {
  return (
    <div className="h-[30px] w-[257px] border border-[#353c42] bg-[#40484f]">
      {lines === 1 && <div className="mt-[10px] h-1 bg-[#9ccaa4]" />}
      {lines === 3 && (
        <div className="flex h-full flex-col gap-[5px] bg-linear-to-b from-[#3b4a48] to-[#3a4f42] pt-[6px]">
          <div className="h-0.5 bg-[#98bfa0]" />
          <div className="h-0.5 bg-[#98d0a0]" />
          <div className="h-0.5 bg-[#98d0a0]" />
        </div>
      )}
    </div>
  );
}

function ChannelRow({ channel, index }: { channel: Channel; index: number }) {
  return (
    <div className="flex h-[30px] shrink-0 items-center pl-[9px]">
      <button aria-label={`${channel.name} 静音`} className="flex h-[9px] w-[9px] items-center justify-center rounded-full border border-[#8bc455] bg-[#3d5c1e]">
        <span className="h-[5px] w-[5px] rounded-full bg-[#b6f25c]" />
      </button>
      <div className="ml-[5px] flex gap-[3px]">
        <Knob angle={index === 4 ? -30 : 0} />
        <Knob angle={channel.knob ?? 0} />
      </div>
      <div className="ml-[7px] flex h-6 w-[33px] shrink-0 items-center justify-end rounded border border-[#3f474e] bg-[#59636a] pr-[9px] text-[15px] text-[#c6d0d4]">
        {channel.no}
      </div>
      <button
        className={clsx(
          "ml-[9px] flex h-[26px] w-[68px] shrink-0 items-center justify-center gap-0.5 overflow-hidden whitespace-nowrap rounded-sm border border-[#3a3f46] bg-linear-to-b pb-0.5",
          channelTone[channel.tone],
        )}
      >
        <span className={hasCjk(channel.name) ? "text-[13px]" : channel.name.length > 8 ? "text-[10px] font-medium" : "text-[11px]"}>
          {channel.name}
        </span>
        {channel.wave && <Icon name="wave" className="h-[14px] w-[14px]" />}
        {channel.auto && <Icon name="zigzag" className="h-[14px] w-[14px]" />}
      </button>
      <div className={clsx("ml-[9px] p-px", channel.selected && "bg-[#a9e84a]")}>
        <div className={clsx("h-[22px] w-[6px] border border-[#394047]", channel.lamp ?? "bg-[#566067]")} />
      </div>
      <div className="ml-2">
        {channel.roll === undefined ? <StepRow label={channel.name} /> : <RollPreview lines={channel.roll} />}
      </div>
    </div>
  );
}

function ChannelRack() {
  return (
    <section className="flex w-[485px] shrink-0 flex-col border-r-2 border-[#2d3338] bg-[#444c53] pr-1 pl-[5px]">
      <header className="flex h-7 shrink-0 items-center text-[#8d959a]">
        <Icon name="tri" className="ml-[5px] h-3 w-3" />
        <Icon name="back" className="ml-[10px] h-[13px] w-[13px]" />
        <div className="relative ml-[62px] flex h-[21px] w-[69px] items-center rounded-sm bg-[#363d43] text-[12px] text-[#a9b0b5]">
          <select aria-label="通道过滤" className="h-full w-full appearance-none bg-transparent pl-1 outline-none">
            <option>全部</option>
          </select>
          <Icon name="tri" className="pointer-events-none absolute right-0.5 h-2 w-2 text-[#646c72]" />
        </div>
        <Icon name="speaker" className="ml-7 h-[15px] w-[15px]" />
        <h2 className="ml-1 text-[14px]">通道机架</h2>
        <span className="ml-[62px] h-5 w-5 rounded-full border-2 border-[#3d444b] bg-[#4b5359]" />
        <span className="ml-[10px] flex h-5 w-[36px] items-center justify-center rounded-md border border-[#373e44]">
          <span className="h-px w-4 bg-[#353c42]" />
        </span>
        <Icon name="bars" className="ml-[10px] h-[14px] w-[15px]" />
        <span className="ml-2 flex gap-px">
          {[0, 1, 2].map((i) => (
            <span key={i} className="h-[11px] w-[5px] border-t-4 border-[#c9a24b] bg-[#8f7432]" />
          ))}
        </span>
        <button aria-label="关闭通道机架" className="ml-2">
          <Icon name="cross" className="h-[11px] w-[11px]" />
        </button>
      </header>
      <div className="flex min-h-0 flex-1 border-t border-[#3b4248] bg-[#5f696f]">
        <div className="flex min-h-0 w-[458px] flex-col overflow-hidden pt-[18px]">
          {channels.map((c, i) => (
            <ChannelRow key={i} channel={c} index={i} />
          ))}
        </div>
        <div className="flex flex-1 flex-col items-center justify-between py-1 text-[#31383e]">
          <div className="flex flex-col items-center gap-[6px]">
            <Icon name="up" className="h-[9px] w-[9px]" />
            <div className="h-[242px] w-1 rounded bg-[#353d45]" />
          </div>
          <Icon name="dn" className="h-[9px] w-[9px]" />
        </div>
      </div>
      <footer className="relative flex h-[30px] shrink-0 items-center">
        <button aria-label="添加通道" className="ml-[133px] flex w-[10px] text-[#d5dbde]">
          <Icon name="plus" className="h-[9px] w-[9px]" />
        </button>
        <div className="ml-[48px] flex w-[276px] flex-col">
          <div className="ml-[5px] h-[7px] w-[257px] bg-[#363d43]" />
          <div className="flex h-[23px] items-center pt-1 text-[#2b3137]">
            <Icon name="left" className="-ml-[5px] h-[9px] w-[9px]" />
            <div className="ml-1 h-[3px] w-[22px] rounded bg-[#2b3137]" />
            <Icon name="right" className="ml-auto h-[9px] w-[9px]" />
          </div>
        </div>
      </footer>
    </section>
  );
}

/* -------------------------------------------------------------- playlist */

const VOCAL_GATE = [0.8, 0.95, 0.9, 0.2, 0.85, 0.9, 0.6, 0.15, 0.8, 0.9, 0.8, 0.3, 0.95, 0.9, 0.35, 1, 1, 0.95, 0.6, 0.2, 0.85, 0.75, 0.7, 0.85, 0.6, 0.2, 0.15, 0.95, 0.9, 0.8];

function envelope(body: Body, t: number, i: number): number {
  switch (body) {
    case "beat":
      return i % 4 === 1 ? 0.65 + noise(i) * 0.35 : i % 4 === 2 ? 0.5 : 0.12;
    case "hat":
      return i % 20 === 15 ? 0.85 : i % 2 ? 0.45 : 0.16;
    case "saw":
      return i % 4 < 2 ? 1 : 0.3;
    case "vocal":
      return VOCAL_GATE[Math.min(29, Math.floor(t * 30))] * (0.8 + noise(i) * 0.2);
    case "vocal2":
      return t < 0.18 ? 0.7 + noise(i) * 0.3 : 0.08 + Math.pow(Math.abs(Math.sin(t * 17)), 4) * 0.6 * noise(i + 3);
    case "chops":
      return t < 0.2 ? Math.pow(Math.abs(Math.sin(t * 24)), 2) * 0.5 : 0.15 + Math.abs(Math.sin(t * 8)) * 0.25 + noise(i) * 0.6;
    case "loop":
      return 0.15 + Math.abs(Math.sin(t * 15)) * 0.2 + noise(i) * 0.35;
    case "wall":
      return 0.7 + noise(i) * 0.3;
    case "v05":
      return t > 0.93 ? (1 - t) * 8 : 0.1 + Math.pow(t, 1.4) * 0.75 + noise(i) * 0.12;
    case "blob":
      return t < 0.1 ? 0.4 + t * 6 : (1 - Math.pow(t, 3) * 0.85) * (0.85 + noise(i) * 0.15);
    case "tail":
      return 0.1 + Math.pow(t, 1.2) * 0.75 + noise(i) * 0.1;
    case "riser":
      return t < 0.7 ? 0.03 + Math.pow(t / 0.7, 2.4) * 0.75 + noise(i) * 0.08 : Math.sqrt(Math.max(0, 1 - Math.pow((t - 0.7) / 0.31, 2))) * 0.85;
    case "decay":
      return 0.05 + (t < 0.02 ? 0.5 : Math.exp(-t * 9)) * (i % 3 ? 0.9 : 0.4);
    case "swell":
      return t > 0.95 ? 1 : Math.pow(t, 1.6) * 0.8 + 0.02;
    case "thin":
      return 0.07 + Math.exp(-Math.pow((t - 0.3) / 0.13, 2)) * 0.16;
    case "stab":
      return 0.05 + Math.exp(-Math.pow((t - 0.12) / 0.08, 2)) * 0.5 + Math.exp(-Math.pow((t - 0.45) / 0.16, 2)) * 0.75 * (0.7 + noise(i) * 0.3);
    default:
      return 1;
  }
}

const samplesPerBar: Partial<Record<Body, number>> = { beat: 12, hat: 10, saw: 14, decay: 10, swell: 14 };

function wavePath(body: Body, bars: number) {
  const n = Math.max(8, Math.round(bars * (samplesPerBar[body] ?? 8)));
  const top: string[] = [];
  const bottom: string[] = [];
  for (let i = 0; i <= n; i++) {
    const a = envelope(body, i / n, i) * 19;
    const x = ((i / n) * 100).toFixed(2);
    top.push(`${x},${(20 - a).toFixed(1)}`);
    bottom.unshift(`${x},${(20 + a).toFixed(1)}`);
  }
  return `M${top.join("L")}L${bottom.join("L")}Z`;
}

type Note = [x: number, y: number, w: number];

function notesFor(body: Body, bars: number): Note[] {
  const notes: Note[] = [];
  if (body === "dots") {
    const lanes = [4, 10, 18, 18, 25, 25, 31, 37];
    for (let i = 0; i < bars * 6; i++) {
      notes.push([noise(i * 1.7) * (bars - 0.2), lanes[Math.floor(noise(i + 90) * 8)], 0.08]);
    }
    return notes;
  }
  if (body === "ticks") {
    return [0.1, 0.35, 0.6, 0.82].map((x) => [x, 36, 0.16] as Note);
  }
  // the long clips open with eight sparse bars
  const intro = bars > 16 ? 8 : 0;
  for (let i = 0; i < intro * 3; i++) {
    if (body === "pads") {
      [6, 12, 24, 30, 36].forEach((y, k) => noise(i * 5 + k) > 0.6 && notes.push([i / 3, y, 0.08]));
    } else {
      notes.push([i / 3, i % 12 < 3 ? 27 : i % 12 < 6 ? 36 : 19, 0.24]);
    }
  }
  for (let b = intro; b < bars; b += 4) {
    const left = bars - b;
    if (body === "chord") {
      notes.push([b, 10, 1], [b + 2, 2, 2], [b + 2, 10, 2], [b, 19, Math.min(4, left)], [b + 1, 36, 1]);
      if (b > intro) notes.push([b, 27, 2], [b, 10, 1]);
    } else {
      notes.push([b + 2, 2, 2], [b, 12, 1], [b + 1, 9, 1], [b + 2, 12, 2], [b, 26, 4], [b, 35, 2]);
    }
  }
  return notes;
}

function ClipBody({ data }: { data: ClipData }) {
  const bars = data.to - data.from;
  const { ink } = clipLook[data.look];
  if (data.body === "empty") return null;
  if (data.body === "ramp") {
    const ends = bars > 16 ? [16, 24, 32, 40, 48] : [16];
    const d = ends.map((e) => `L${e - 4},39C${e - 2.5},37 ${e - 1},22 ${e},3L${e},39`).join("");
    return (
      <svg viewBox={`0 0 ${bars} 40`} preserveAspectRatio="none" className="h-full w-full" aria-hidden="true">
        <path d={`M0,39${d}`} fill={ink} fillOpacity="0.120" stroke={ink} strokeWidth="1.500" vectorEffect="non-scaling-stroke" />
      </svg>
    );
  }
  if (["chord", "pads", "dots", "ticks"].includes(data.body)) {
    return (
      <svg viewBox={`0 0 ${bars} 40`} preserveAspectRatio="none" className="h-full w-full" shapeRendering="crispEdges" aria-hidden="true">
        {notesFor(data.body, bars).map(([x, y, w], i) => (
          <rect key={i} x={x} y={y} width={w} height={w < 0.2 ? 3 : data.body === "pads" ? 5 : 4} fill={ink} />
        ))}
      </svg>
    );
  }
  return (
    <svg viewBox="0 0 100 40" preserveAspectRatio="none" className="h-full w-full" aria-hidden="true">
      <path d={wavePath(data.body, bars)} fill={ink} />
    </svg>
  );
}

function StripeClip({ data }: { data: ClipData }) {
  const bars = data.to - data.from;
  const hits = Array.from({ length: bars * 4 }, (_, i) => i);
  return (
    <div className="absolute top-0 bottom-px overflow-hidden" style={{ left: at(data.from), width: len(bars) }}>
      <svg viewBox={`0 0 ${bars} 36`} preserveAspectRatio="none" className="h-full w-full" aria-hidden="true">
        <rect width={bars} height="36" fill="#302d48" fillOpacity="0.600" />
        {hits.map((i) => {
          const w = i % 32 === 31 ? 0.25 : i % 4 === 3 ? 0.12 : 0.18;
          return (
            <g key={i}>
              <rect x={i / 4} y="0" width={w} height="16" fill="#955ccc" />
              <rect x={i / 4} y="16" width={w} height="20" fill="#f2b6ff" />
            </g>
          );
        })}
      </svg>
    </div>
  );
}

function Clip({ data }: { data: ClipData }) {
  if (data.kind === "stripes") return <StripeClip data={data} />;
  const bars = data.to - data.from;
  const icon = data.kind === "pattern" ? "step" : data.kind === "audio" ? "sample" : "link";
  return (
    <div className="absolute top-0 bottom-px flex flex-col overflow-hidden" style={{ left: at(data.from), width: len(bars) }}>
      <div
        className={clsx(
          "flex h-[15px] shrink-0 items-center gap-[3px] whitespace-nowrap rounded-t-sm border-r border-black/25 bg-linear-to-b pl-0.5 text-[10px] leading-[15px]",
          clipLook[data.look].head,
        )}
      >
        <Icon name={icon} className={clsx("w-[9px] text-white", data.kind === "pattern" ? "h-[11px]" : "h-[10px]")} />
        {data.title && <span className={clsx(hasCjk(data.title) && "text-[12px]")}>{data.title}</span>}
      </div>
      <div className="min-h-0 flex-1 bg-[#684a95]/85">
        <ClipBody data={data} />
      </div>
    </div>
  );
}

function Grid() {
  return (
    <svg className="absolute inset-0 h-full w-full" shapeRendering="crispEdges" aria-hidden="true">
      {Array.from({ length: 12 }, (_, i) => (
        <rect key={i} x={at(5 + i * 8)} y="0" width={len(4)} height="100%" fill="#2d3d47" />
      ))}
      {Array.from({ length: 89 * 4 }, (_, i) => (
        <line key={i} x1={at(1 + i / 4)} x2={at(1 + i / 4)} y1="0" y2="100%" stroke={i % 4 ? "#2a3a44" : "#13202a"} strokeOpacity={i % 4 ? 0.45 : 1} />
      ))}
    </svg>
  );
}

function MiniMap() {
  return (
    <svg viewBox={`0 0 ${MAP_SPAN} 19`} preserveAspectRatio="none" className="h-[19px] w-[90%] border border-[#687277] bg-[#505a60]" aria-hidden="true">
      {tracks.flatMap((t) =>
        t.clips.map((c, i) => (
          <rect key={`${t.no}-${i}`} x={c.from - 1} y={t.no - 3.5} width={c.to - c.from} height="1.300" fill={clipLook[c.look].color} />
        )),
      )}
      <rect x={PLAYHEAD - 1} y="0" width="0.200" height="19" fill="#e6f23c" />
    </svg>
  );
}

function TrackHead({ track }: { track: Track }) {
  return (
    <div className={clsx("flex shrink-0 gap-0.5", track.height)}>
      <div className={clsx("relative flex w-[99px] flex-col justify-between rounded-r-lg border-b border-black/20 pl-0.5", track.shade)}>
        <span className={clsx("text-[13px] leading-4", track.muted ? "text-white/35" : "text-white")}>Track {track.no}</span>
        <span className="pb-0.5 pl-3 text-[12px] leading-[8px] text-[#7b5bb0]">...</span>
        <button aria-label={`Track ${track.no} 开关`} className="absolute bottom-1 right-[5px] h-[10px] w-[9px] rounded-full border-2 border-[#47582c] bg-[#a8ec50]" />
      </div>
      <div className={clsx("mb-px flex-1", track.lamp ?? "bg-[#2a333c]")} />
    </div>
  );
}

function Picker() {
  const [current, setCurrent] = useState(10);
  return (
    <aside className="flex w-[161px] shrink-0 flex-col pl-1.5">
      <div className="flex h-[39px] shrink-0 items-center gap-[31px] pt-[11px] pl-[15px] text-[#626b71]">
        <Icon name="keys" className="h-4 w-4 text-[#dfe5e8]" />
        <Icon name="wave" className="h-4 w-4" />
        <Icon name="link" className="h-4 w-4" />
      </div>
      <div className="flex min-h-0 flex-1 justify-between border border-[#272d32] bg-[#363d43] pl-[3px]">
        <ul className="flex w-[135px] flex-col gap-[3px] pt-[3px]">
          {patterns.map((p, i) => (
            <li key={p.name} className="relative">
              <button
                onClick={() => setCurrent(i)}
                className={clsx(
                  "relative flex h-7 w-full items-center gap-[3px] overflow-hidden border bg-linear-to-b pb-px pl-0.5 text-[13px]",
                  p.look,
                  i === current ? "border-[#e6e46a]" : "border-white/10",
                )}
              >
                <Icon name="step" className="h-[11px] w-2 text-white" />
                <span>{p.name}</span>
                {p.lines && (
                  <svg viewBox="0 0 80 28" preserveAspectRatio="none" className="absolute inset-y-0 right-1 h-full w-[86px]" aria-hidden="true">
                    <path
                      d={p.lines === 1 ? "M0 17h80" : "M0 7h20M34 7h16M60 7h20M0 12h80M8 20h20M46 20h22M0 26h10M30 26h12M62 26h12"}
                      stroke="#fff"
                      strokeOpacity={p.lines === 1 ? 0.2 : 0.16}
                      strokeWidth="1.500"
                    />
                  </svg>
                )}
                {p.dots && (
                  <svg viewBox="0 0 135 28" className="absolute inset-0 h-full w-full" aria-hidden="true">
                    <path
                      d="M2 24h3M18 24h3M34 24h3M46 24h3M58 24h3M66 24h3M75 24h3M84 24h3M92 24h3M100 19h4M108 13h4M117 9h4M126 4h4"
                      stroke="#5d666c"
                      strokeWidth="4"
                    />
                  </svg>
                )}
                {p.strip && <span className={clsx("absolute inset-y-0 right-0 w-1", p.strip)} />}
              </button>
              {i === current && (
                <svg viewBox="0 0 8 14" className="absolute -left-0.5 top-[7px] h-[14px] w-2" aria-hidden="true">
                  <path d="M1 1l6 6-6 6z" fill="#e8394e" stroke="#3a1016" />
                </svg>
              )}
            </li>
          ))}
        </ul>
        <div className="w-[14px] bg-[#343b41]">
          <div className="flex h-[14px] items-center justify-center border border-[#5b6369] bg-[#4b5359]">
            <span className="h-1 w-0.5 bg-[#1f2529]" />
          </div>
        </div>
      </div>
      <div className="flex h-7 shrink-0 items-center justify-center pr-3">
        <button aria-label="添加样式" className="text-[#d5dbde]">
          <Icon name="plus" className="h-[9px] w-[9px]" />
        </button>
      </div>
    </aside>
  );
}

function Playlist() {
  return (
    <section className="flex min-w-0 flex-1 flex-col bg-[#40474e] pr-[7px]">
      <header className="flex h-7 shrink-0 items-center text-[#d5dbde]">
        <Icon name="tri" className="ml-[10px] h-3 w-3" />
        <Icon name="magnet" className="ml-[7px] h-[15px] w-[15px] text-[#62e8a0]" />
        <div className="ml-[18px] flex gap-[5px]">
          {["pencil", "brush", "erase", "mute", "slip", "slice", "select", "zoom", "play"].map((n) => (
            <button key={n} aria-label={n}>
              <Icon name={n} className={clsx("h-4 w-4", n === "brush" && "text-[#5ab4f0]")} />
            </button>
          ))}
        </div>
        <Icon name="speaker" className="ml-4 h-[15px] w-[15px] text-[#aee84e]" />
        <h2 className="ml-1.5 flex items-center text-[14px] text-[#d5dbde]">
          播放列表 - 编曲
          <Icon name="tri" className="mx-1 h-2 w-2 text-[#7d868b]" />
          样式 11
          <Icon name="tri" className="mx-1 h-2 w-2 text-[#7d868b]" />
        </h2>
        <div className="ml-auto flex items-center gap-[11px] pr-[3px]">
          <button aria-label="最小化播放列表" className="h-[6px] w-[7px] self-start border-t-2 border-white" />
          <button aria-label="最大化播放列表" className="h-[7px] w-[9px] border border-t-2 border-white" />
          <button aria-label="关闭播放列表" className="text-white">
            <Icon name="cross" className="h-[10px] w-[10px]" />
          </button>
        </div>
      </header>
      <div className="flex min-h-0 flex-1">
        <Picker />
        <div className="ml-[7px] mb-[6px] flex min-w-0 flex-1 flex-col">
          <div className="flex h-10 shrink-0">
            <button aria-label="添加轨道" className="flex w-[30px] shrink-0 items-end justify-center rounded-tl-xl border border-[#2b3136] bg-[#4d555b] pb-[7px] pl-1 text-[#d5dbde]">
              <Icon name="plus" className="h-[9px] w-[9px]" />
            </button>
            <div className="flex w-[81px] shrink-0 justify-around border border-[#2b3136] bg-[#555d63] pt-px text-[8px] text-[#757d83]">
              <button className="flex flex-col items-center gap-2">
                <Icon name="wave" className="h-4 w-4" />
                音频
              </button>
              <button className="flex flex-col items-center gap-2">
                <Icon name="link" className="h-4 w-4" />
                自动
              </button>
              <button className="flex flex-col items-center gap-2 text-[#e5eaec]">
                <Icon name="keys" className="h-4 w-4" />
                样式
              </button>
            </div>
            <div className="flex min-w-0 flex-1 flex-col">
              <div className="flex h-[19px]">
                <button aria-label="向左滚动" className="flex w-5 shrink-0 items-center justify-center border border-[#62696f] bg-[#4b5359] text-[#23292e]">
                  <Icon name="left" className="h-3 w-3" />
                </button>
                <div className="min-w-0 flex-1 bg-[#363d43]">
                  <MiniMap />
                </div>
                <button aria-label="向右滚动" className="flex w-5 shrink-0 items-center justify-center border border-[#62696f] bg-[#4b5359] text-[#23292e]">
                  <Icon name="right" className="h-3 w-3" />
                </button>
              </div>
              <div className="relative flex-1 overflow-hidden bg-linear-to-b from-[#1c272e] to-[#26343c] text-[12px] leading-[21px] text-[#94a0a7]">
                {Array.from({ length: 23 }, (_, i) => (
                  <span key={i} className="absolute top-0 pl-px" style={{ left: at(1 + i * 4) }}>
                    {1 + i * 4}
                  </span>
                ))}
                <svg viewBox="0 0 16 12" className="absolute top-[3px] h-3 w-4 -translate-x-1/2" style={{ left: at(PLAYHEAD) }} aria-hidden="true">
                  <path d="M1 1h14l-2 4-5 6-5-6z" fill="#8ed635" stroke="#c6f57c" />
                </svg>
              </div>
            </div>
            <div className="flex w-5 shrink-0 flex-col pl-px">
              <div className="flex h-[19px] items-center justify-center border border-[#62696f] bg-[#4b5359]">
                <span className="h-1 w-1 bg-[#1f2529]" />
              </div>
              <button aria-label="向上滚动" className="flex flex-1 items-center justify-center border border-[#62696f] bg-[#4b5359] text-[#2b3136]">
                <Icon name="up" className="h-3 w-3" />
              </button>
            </div>
          </div>
          <div className="flex min-h-0 flex-1 overflow-hidden">
            <div className="w-[111px] shrink-0 bg-[#27303a]">
              {tracks.map((t) => (
                <TrackHead key={t.no} track={t} />
              ))}
            </div>
            <div className="relative min-w-0 flex-1 overflow-hidden bg-[#34444e]">
              <Grid />
              <div className="absolute inset-y-0 w-3 -translate-x-full bg-linear-to-r from-transparent to-[#4f9410]" style={{ left: at(PLAYHEAD) }} />
              <div className="relative">
                {tracks.map((t) => (
                  <div key={t.no} className={clsx("relative border-b border-[#12202a]", t.height)}>
                    {t.clips.map((c, i) => (
                      <Clip key={i} data={c} />
                    ))}
                  </div>
                ))}
              </div>
              <div className="absolute inset-y-0 w-px bg-[#b4ee58]/80" style={{ left: at(PLAYHEAD) }} />
              <p className="absolute bottom-[18px] right-0 font-['Open_Sans'] text-[22px] font-bold leading-7 text-white [text-shadow:1px_2px_3px_#000]">
                www.flpdown.com
              </p>
            </div>
            <div className="flex w-5 shrink-0 flex-col justify-between bg-[#3a4249] pt-1 pl-px">
              <div className="h-[33px] border border-[#5f676d] bg-[#4f575d]" />
              <button aria-label="向下滚动" className="flex h-[18px] items-center justify-center border border-[#52595f] bg-[#434b51] text-[#2b3136]">
                <Icon name="dn" className="h-3 w-3" />
              </button>
            </div>
          </div>
        </div>
      </div>
    </section>
  );
}

export default function App() {
  return (
    <div className="flex h-screen flex-col overflow-hidden bg-[#5c646b] font-['Noto_Sans_CJK_SC',sans-serif] leading-none select-none">
      <div className="shrink-0 border-b border-[#2d3338]">
        <TopBar />
        <SecondBar />
      </div>
      <main className="flex min-h-0 flex-1">
        <ChannelRack />
        <Playlist />
      </main>
    </div>
  );
}
